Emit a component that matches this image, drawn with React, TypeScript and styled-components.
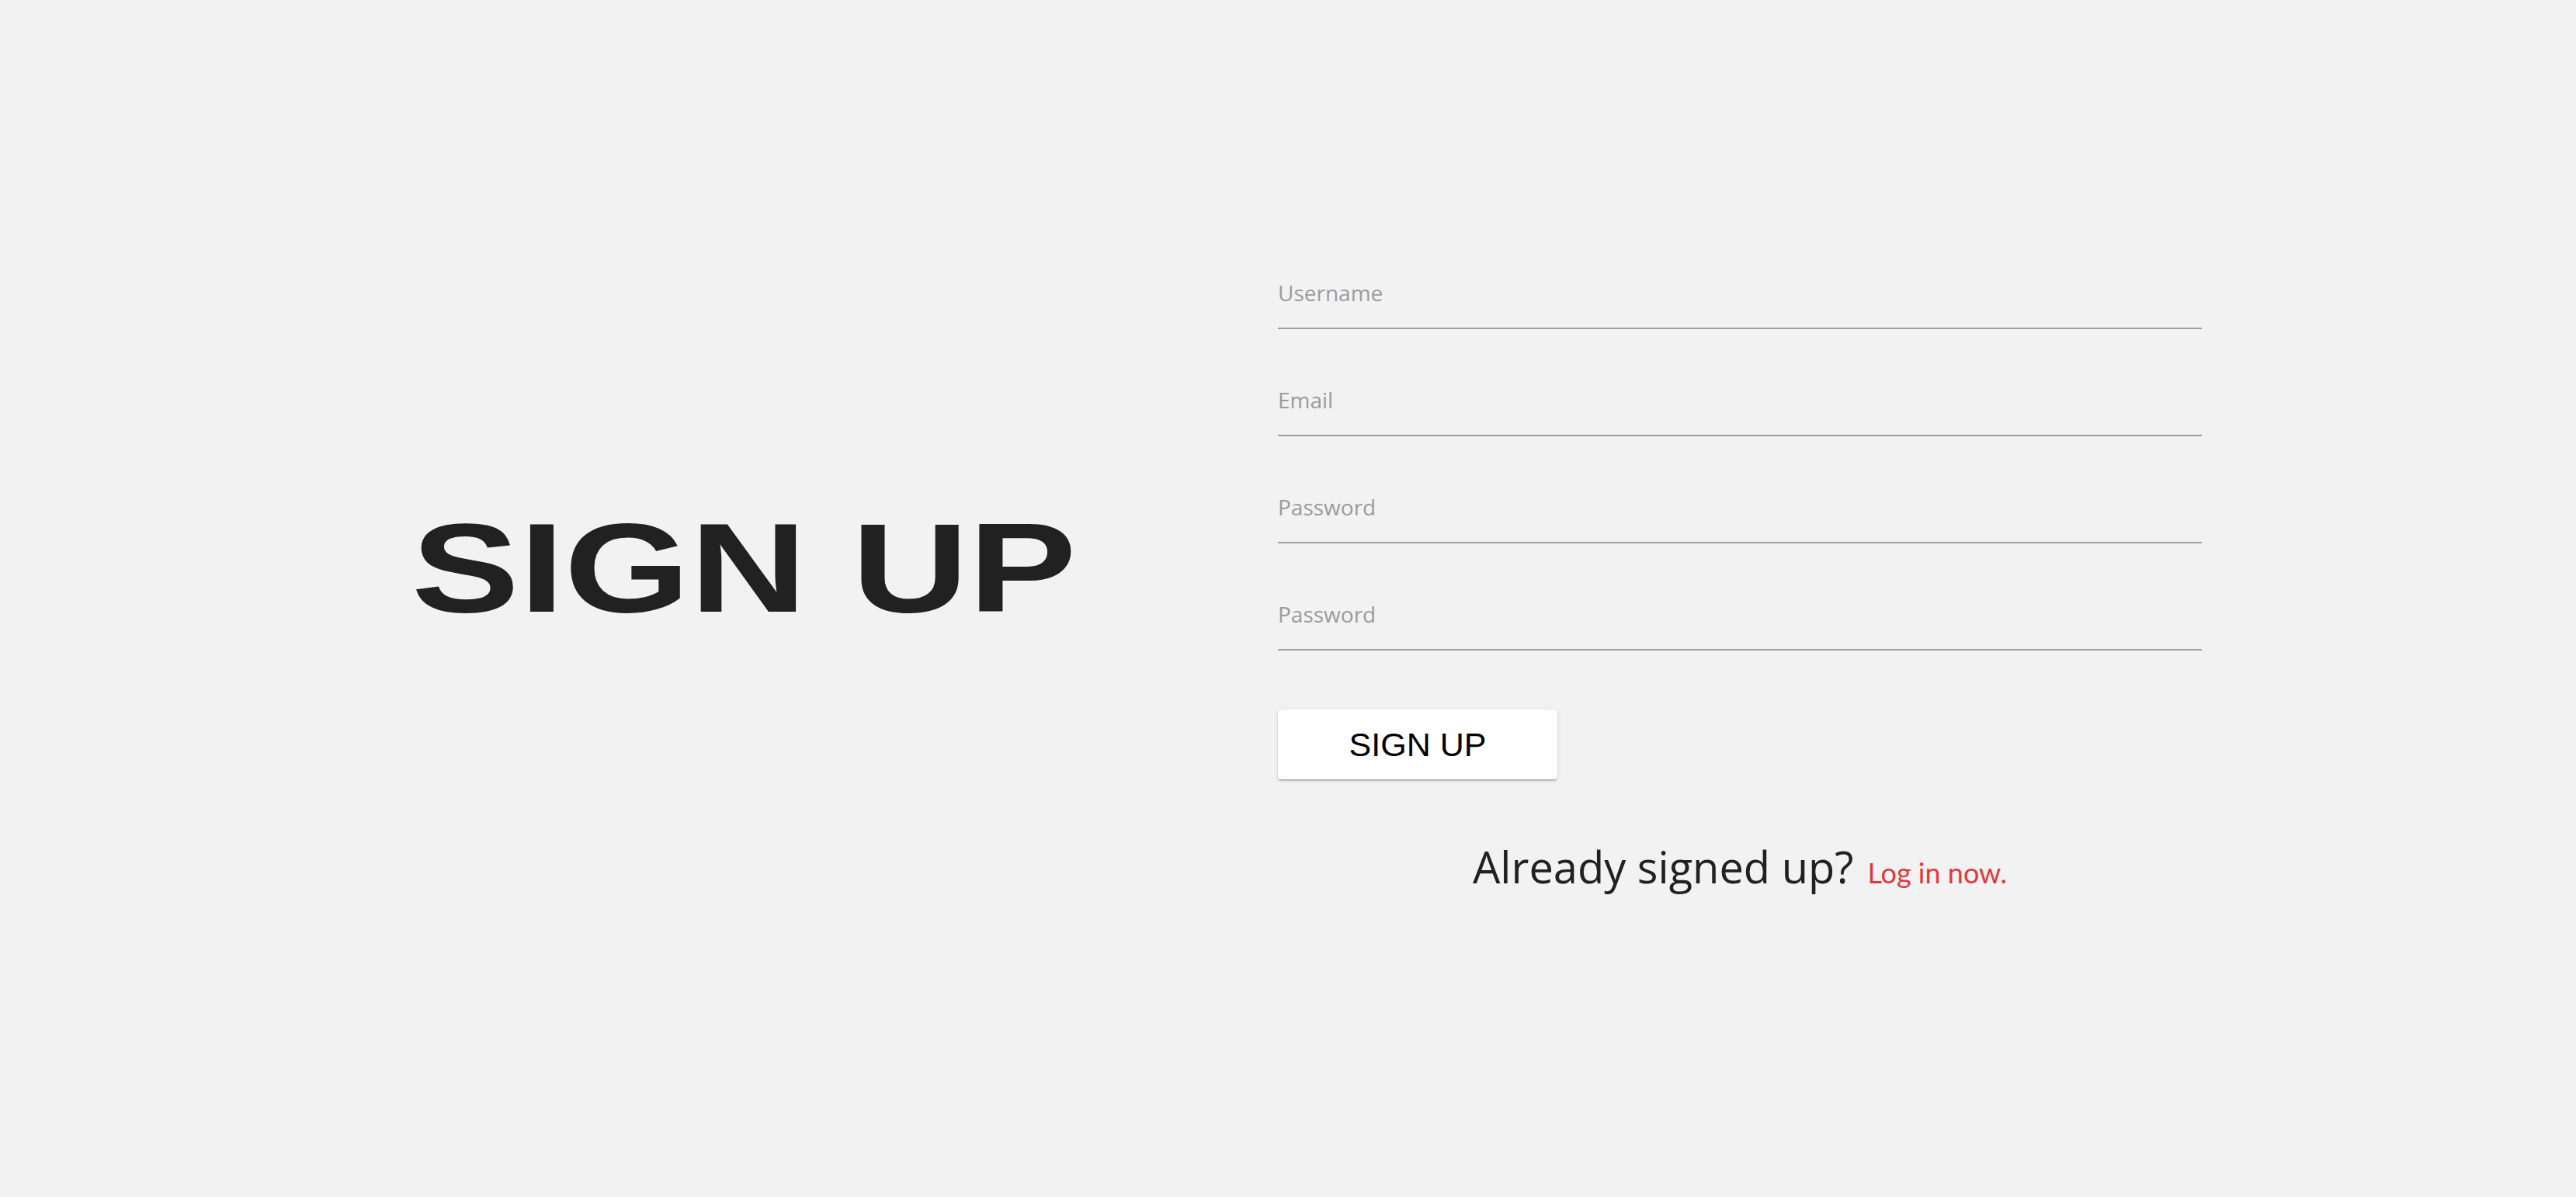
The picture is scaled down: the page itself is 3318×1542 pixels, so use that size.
import React from "react";
import styled, { createGlobalStyle } from "styled-components";

const GlobalStyle = createGlobalStyle`
  html, body {
    margin: 0;
    padding: 0;
    background: #f2f2f2;
  }
  body {
    font-family: "Open Sans", "Liberation Sans", sans-serif;
  }
  * { box-sizing: border-box; }
`;

const Page = styled.main`
  min-height: 100vh;
  background: #f2f2f2;
  display: flex;
  align-items: flex-start;
  padding: 357px 0 0 530px;
`;

const HeadingCol = styled.div`
  flex: 0 0 1116px;
  padding-top: 293px;
`;

const Heading = styled.h1`
  margin: 0;
  font-family: "Liberation Sans", Arial, sans-serif;
  font-weight: 700;
  font-size: 164px;
  line-height: 1;
  color: #212121;
  white-space: nowrap;
  display: inline-block;
  transform: scaleX(1.27);
  transform-origin: left center;
`;

const Form = styled.form`
  flex: 0 0 1190px;
  display: flex;
  flex-direction: column;
  gap: 71px;
`;

const Field = styled.input`
  display: block;
  width: 100%;
  height: 67px;
  padding: 0 0 25px;
  margin: 0;
  border: none;
  border-bottom: 2px solid #9e9e9e;
  background: transparent;
  font-family: "Open Sans", "Liberation Sans", sans-serif;
  font-size: 28px;
  line-height: 40px;
  color: #333;
  outline: none;
  &::placeholder {
    color: #9b9b9b;
    opacity: 1;
  }
`;

const Actions = styled.div`
  display: flex;
  flex-direction: column;
  margin-top: 5px;
`;

const SubmitButton = styled.button`
  align-self: flex-start;
  width: 360px;
  height: 90px;
  border: none;
  border-radius: 4px;
  background: #ffffff;
  color: #000;
  font-family: "Liberation Sans", Arial, sans-serif;
  font-size: 43px;
  cursor: pointer;
  box-shadow: 0 3px 1px -2px rgba(0, 0, 0, 0.2), 0 2px 2px 0 rgba(0, 0, 0, 0.14),
    0 1px 5px 0 rgba(0, 0, 0, 0.12);
`;

const Footer = styled.p`
  margin: 79px 0 0;
  display: flex;
  justify-content: center;
  align-items: baseline;
  gap: 18px;
  line-height: 1.2;
`;

const Question = styled.span`
  font-family: "Open Sans", "Liberation Sans", sans-serif;
  font-size: 56px;
  color: #212121;
`;

const LoginLink = styled.a`
  font-family: "Lato", "Liberation Sans", sans-serif;
  font-size: 36px;
  color: #e0393c;
  text-decoration: none;
  cursor: pointer;
`;

export default function App() {
  return (
    <>
      <GlobalStyle />
      <Page>
        <HeadingCol>
          <Heading>SIGN UP</Heading>
        </HeadingCol>
        <Form onSubmit={(e) => e.preventDefault()}>
          <Field type="text" placeholder="Username" />
          <Field type="email" placeholder="Email" />
          <Field type="password" placeholder="Password" />
          <Field type="password" placeholder="Password" />
          <Actions>
            <SubmitButton type="submit">SIGN UP</SubmitButton>
            <Footer>
              <Question>Already signed up?</Question>
              <LoginLink>Log in now.</LoginLink>
            </Footer>
          </Actions>
        </Form>
      </Page>
    </>
  );
}
